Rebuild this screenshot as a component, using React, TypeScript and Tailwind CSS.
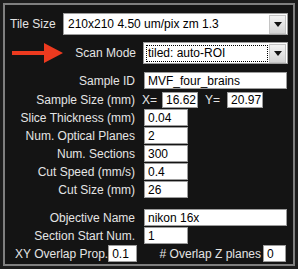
import React from "react";

const font = "font-['Liberation_Sans',Arial,sans-serif]";

function Caret() {
  return (
    <span className="mr-px flex h-[19px] w-[17px] items-center justify-center border border-[#c4c4c4] bg-gradient-to-b from-[#f4f4f4] to-[#d4d4d4]">
      <svg width="8" height="5" viewBox="0 0 8 5">
        <path d="M0 0H8L4 5Z" fill="#111" />
      </svg>
    </span>
  );
}

function Select({ value, width, focused }: { value: string; width: string; focused?: boolean }) {
  return (
    <div className={`flex h-[22px] items-center border border-[#9c9c9c] bg-white ${width}`}>
      <div className="flex-1 pl-[2px] pr-px">
        <span
          className={`block h-[17px] pl-px text-[12px] leading-[15px] text-black ${
            focused ? "border border-dotted border-black" : "border border-transparent"
          }`}
        >
          {value}
        </span>
      </div>
      <Caret />
    </div>
  );
}

function Box({ value, width, height = "h-[17px]" }: { value: string; width: string; height?: string }) {
  return (
    <div className={`flex items-center border border-[#9c9c9c] bg-white pl-[3px] text-[12px] leading-none text-black ${width} ${height}`}>
      {value}
    </div>
  );
}

function Row({ label, className, children }: { label: string; className: string; children: React.ReactNode }) {
  return (
    <div className={`flex items-center ${className}`}>
      <div className="w-[131px] pr-px text-right">{label}</div>
      <div className="ml-[8px] flex items-center">{children}</div>
    </div>
  );
}

export default function App() {
  return (
    <div className={`h-[269px] w-[298px] bg-[#1c1c1c] p-[3px] ${font}`}>
      <div className="flex h-full flex-col border-2 border-[#7f7f7f] bg-[#141414] pr-[5px] pt-[8px] text-[12px] text-[#e4e4e4]">
        <div className="flex h-[22px] items-center pl-[5px]">
          <span>Tile Size</span>
          <div className="ml-auto">
            <Select value="210x210 4.50 um/pix zm 1.3" width="w-[225px]" />
          </div>
        </div>

        <div className="mt-[7px] flex h-[22px] items-center">
          <svg className="ml-[7px]" width="52" height="22" viewBox="0 0 52 22">
            <path d="M0 9H32V1L51 11L32 21V13H0Z" fill="#ec3a1f" />
          </svg>
          <span className="ml-auto mr-[7px]">Scan Mode</span>
          <Select value="tiled: auto-ROI" width="w-[145px]" focused />
        </div>

        <Row label="Sample ID" className="mt-[8px] h-[17px]">
          <Box value="MVF_four_brains" width="w-[143px]" />
        </Row>

        <Row label="Sample Size (mm)" className="mt-[3px] h-[16px]">
          <span className="-ml-[2px]">X=</span>
          <div className="ml-[5px]">
            <Box value="16.62" width="w-[36px]" height="h-[16px]" />
          </div>
          <span className="ml-[7px]">Y=</span>
          <div className="ml-[7px]">
            <Box value="20.97" width="w-[36px]" height="h-[16px]" />
          </div>
        </Row>

        <Row label="Slice Thickness (mm)" className="mt-px h-[17px]">
          <Box value="0.04" width="w-[44px]" />
        </Row>
        <Row label="Num. Optical Planes" className="mt-px h-[17px]">
          <Box value="2" width="w-[44px]" />
        </Row>
        <Row label="Num. Sections" className="mt-px h-[17px]">
          <Box value="300" width="w-[44px]" />
        </Row>
        <Row label="Cut Speed (mm/s)" className="mt-px h-[17px]">
          <Box value="0.4" width="w-[44px]" />
        </Row>
        <Row label="Cut Size (mm)" className="mt-px h-[17px]">
          <Box value="26" width="w-[44px]" />
        </Row>

        <Row label="Objective Name" className="mt-[11px] h-[17px]">
          <Box value="nikon 16x" width="w-[143px]" />
        </Row>
        <Row label="Section Start Num." className="mt-px h-[17px]">
          <Box value="1" width="w-[44px]" />
        </Row>

        <div className="mt-px flex h-[17px] items-center pl-[10px]">
          <span>XY Overlap Prop.</span>
          <Box value="0.1" width="w-[29px]" />
          <span className="ml-auto"># Overlap Z planes</span>
          <div className="ml-[2px] mr-[2px]">
            <Box value="0" width="w-[23px]" />
          </div>
        </div>
      </div>
    </div>
  );
}
